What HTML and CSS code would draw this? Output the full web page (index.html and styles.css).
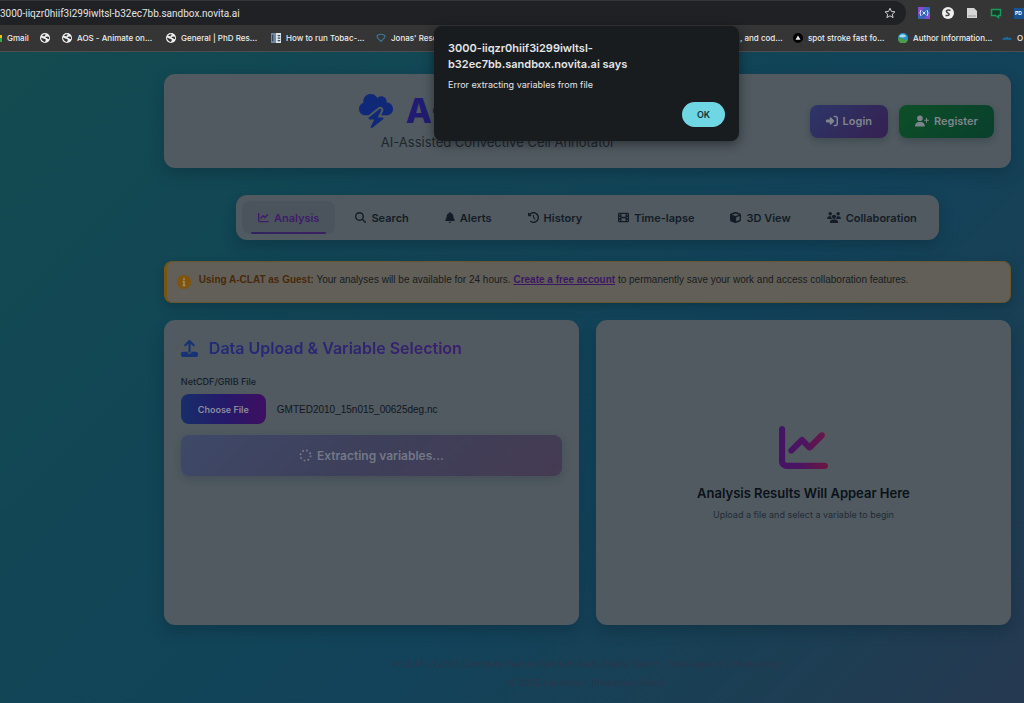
FILE: index.html
```html
<!DOCTYPE html>
<html lang="en">
<head>
<meta charset="utf-8">
<title>A-CLAT</title>
<link rel="stylesheet" href="styles.css">
</head>
<body>
<svg class="defs" aria-hidden="true">
  <defs>
    <linearGradient id="grad-result" x1="0" y1="0" x2="1" y2="0"><stop offset="0" stop-color="#431564"/><stop offset=".45" stop-color="#4c1462"/><stop offset="1" stop-color="#6c1740"/></linearGradient>
    <symbol id="chart" viewBox="0 0 512 512"><path d="M64 64c0-17.7-14.3-32-32-32S0 46.3 0 64V400c0 44.200 35.800 80 80 80H480c17.700 0 32-14.300 32-32s-14.300-32-32-32H80c-8.800 0-16-7.200-16-16V64zm406.600 86.600c12.500-12.500 12.500-32.800 0-45.300s-32.800-12.500-45.300 0L320 210.700l-57.400-57.400c-12.500-12.500-32.800-12.500-45.300 0l-112 112c-12.500 12.500-12.500 32.800 0 45.300s32.800 12.500 45.300 0L240 221.300l57.400 57.400c12.500 12.500 32.800 12.500 45.300 0l128-128z"/></symbol>
    <symbol id="globe" viewBox="0 0 20 20"><circle cx="10" cy="10" r="10" fill="#f1f1f1"/><path d="M3 6c3-1 3 1 5 1s1-3 4-3c-1-2-5-2-9 2zM2 9c4 1 5 3 8 3 3 1 1 4 0 6-4-1-8-4-8-9zM11 8c3-2 5-1 7 0v4c-3 1-3-2-5-2-1 0-2-1-2-2z" fill="#333"/></symbol>
  </defs>
</svg>
<div class="browser">
  <div class="toolbar">
    <div class="omnibox">
      <input class="url" type="text" aria-label="Address" value="3000-iiqzr0hiif3i299iwltsl-b32ec7bb.sandbox.novita.ai">
      <button class="star" aria-label="Bookmark this page"><svg viewBox="0 0 24 24" width="12" height="12"><path d="M12 2.500l2.900 6.400 7 .7-5.300 4.700 1.600 6.900L12 17.600l-6.200 3.600 1.600-6.900L2.100 9.600l7-.7z" fill="none" stroke="#d0d0d0" stroke-width="2"/></svg></button>
    </div>
    <div class="extensions">
      <svg viewBox="0 0 12 12"><rect width="12" height="12" rx="1" fill="#3565bd"/><path d="M0 0h7L0 9zM12 12V5L6 12z" fill="#894bcc"/><path d="M3 3q-2 3 0 6M9 3q2 3 0 6M4.500 4.500l3 3m0-3l-3 3" stroke="#e2e6ff" fill="none"/></svg>
      <svg viewBox="0 0 12 12"><circle cx="6" cy="6" r="6" fill="#f0f0f0"/><path d="M8.500 3.500C5 2 3 4.500 5.500 5.700S8 9 3.500 8.500" stroke="#444" stroke-width="1.500" fill="none"/></svg>
      <svg viewBox="0 0 12 12"><path d="M1 1h7l3 3v7H1z" fill="#d5d5d5"/><path d="M2 9h8" stroke="#999" fill="none"/></svg>
      <svg viewBox="0 0 12 12"><path d="M1.500 2.500h9v6h-2v2l-3-2h-4z" fill="#163b29" stroke="#199b59" stroke-width="1.500"/></svg>
      <span class="pdf">PD</span>
    </div>
  </div>
  <nav class="bookmarks" aria-label="Bookmarks">
    <a class="bm bm-gmail" href="#"><i class="gmail"></i>Gmail</a>
    <a class="bm bm-globe" href="#" aria-label="Site"><svg><use href="#globe"/></svg></a>
    <a class="bm bm-aos" href="#"><svg><use href="#globe"/></svg>AOS - Animate on...</a>
    <a class="bm bm-general" href="#"><svg><use href="#globe"/></svg>General | PhD Res...</a>
    <a class="bm bm-tobac" href="#"><svg viewBox="0 0 12 12"><rect width="6" height="12" fill="#71899e"/><rect x="6" width="6" height="12" fill="#dce4eb"/><path d="M2 2v8M8 3h3M8 6h3M8 9h3" stroke="#35495b" stroke-width="1.500"/></svg>How to run Tobac-...</a>
    <a class="bm bm-jonas" href="#"><svg viewBox="0 0 12 12"><path d="M1.500 3Q6 0 10.500 3C12 6 8 7.500 6 10 4 7.500 0 6 1.500 3z" fill="none" stroke="#3f7695" stroke-width="1.400"/></svg>Jonas' Resources</a>
    <a class="bm bm-code" href="#">, and cod...</a>
    <a class="bm bm-spot" href="#"><svg viewBox="0 0 12 12"><circle cx="6" cy="6" r="6" fill="#000"/><path d="M6 3l3 5H3z" fill="#eee"/></svg>spot stroke fast fo...</a>
    <a class="bm bm-author" href="#"><svg viewBox="0 0 12 12"><circle cx="6" cy="6" r="6" fill="#268fd0"/><path d="M0 7q3-3 6 0t6 0a6 6 0 0 1-12 0" fill="#4b9b4b"/><path d="M1 4q5-5 9 0-5 3-9 0" fill="#a7daf0"/></svg>Author Information...</a>
    <a class="bm bm-last" href="#"><svg viewBox="0 0 12 12"><path d="M0 8q2-4 4-2 2-3 4 0 2-2 4 2z" fill="#176fa0"/></svg>O</a>
  </nav>
</div>

<main class="page">
  <header class="card header">
    <div class="brand">
      <div class="brand-row">
        <svg viewBox="0 0 512 512" width="34" height="34" fill="#0f2878"><path d="M0 224c0 53 43 96 96 96h47.200L290 202.500c17.600-14.100 42.600-14 60.200 .2s22.800 38.600 12.800 58.800L333.700 320H352h64c53 0 96-43 96-96s-43-96-96-96c-.5 0-1.100 0-1.600 0c1.100-5.200 1.600-10.500 1.600-16c0-44.200-35.800-80-80-80c-24.300 0-46.100 10.900-60.800 28C256.500 24.300 219.100 0 176 0C114.100 0 64 50.100 64 112c0 7.100 .7 14.100 1.900 20.800C27.600 145.400 0 181.500 0 224zm330.100 3.600c-5.800-4.700-14.200-4.700-20.100-.1l-160 128c-5.300 4.200-7.400 11.400-5.100 17.800s8.300 10.700 15.100 10.700h70.100L177.700 488.800c-3.400 6.700-1.600 14.900 4.300 19.600s14.200 4.700 20.100 .1l160-128c5.300-4.200 7.400-11.400 5.100-17.800s-8.300-10.700-15.100-10.700H281.900l52.400-104.800c3.400-6.700 1.600-14.900-4.200-19.600z"/></svg>
        <h1>A-CLAT</h1>
      </div>
      <p class="tagline">AI-Assisted Convective Cell Annotator</p>
    </div>
    <div class="auth">
      <button class="btn login"><svg viewBox="0 0 512 512" width="12" height="12"><path d="M217.900 105.900L340.700 228.700c7.200 7.200 11.300 17.100 11.300 27.300s-4.100 20.100-11.300 27.300L217.900 406.100c-6.400 6.400-15 9.900-24 9.900c-18.700 0-33.900-15.200-33.900-33.900l0-62.100L32 320c-17.700 0-32-14.300-32-32l0-64c0-17.700 14.300-32 32-32l128 0 0-62.100c0-18.700 15.200-33.900 33.900-33.900c9 0 17.600 3.600 24 9.900zM352 416l64 0c17.700 0 32-14.300 32-32l0-256c0-17.700-14.300-32-32-32l-64 0c-17.700 0-32-14.300-32-32s14.300-32 32-32l64 0c53 0 96 43 96 96l0 256c0 53-43 96-96 96l-64 0c-17.700 0-32-14.300-32-32s14.300-32 32-32z"/></svg>Login</button>
      <button class="btn register"><svg viewBox="0 0 640 512" width="14" height="12"><path d="M96 128a128 128 0 1 1 256 0A128 128 0 1 1 96 128zM0 482.300C0 383.800 79.800 304 178.300 304h91.400C368.200 304 448 383.800 448 482.300c0 16.400-13.300 29.700-29.700 29.700H29.700C13.300 512 0 498.700 0 482.300zM504 312V248H440c-13.300 0-24-10.700-24-24s10.700-24 24-24h64V136c0-13.300 10.700-24 24-24s24 10.700 24 24v64h64c13.300 0 24 10.700 24 24s-10.700 24-24 24H552v64c0 13.300-10.700 24-24 24s-24-10.700-24-24z"/></svg>Register</button>
    </div>
  </header>

  <nav class="card tabs" aria-label="Sections">
    <button class="tab active"><svg viewBox="0 0 512 512" width="11" height="11"><use href="#chart"/></svg>Analysis</button>
    <button class="tab"><svg viewBox="0 0 512 512" width="11" height="11"><path d="M416 208c0 45.900-14.900 88.300-40 122.700L502.600 457.400c12.500 12.500 12.500 32.800 0 45.300s-32.800 12.500-45.300 0L330.700 376c-34.400 25.200-76.800 40-122.700 40C93.100 416 0 322.900 0 208S93.100 0 208 0S416 93.100 416 208zM208 352a144 144 0 1 0 0-288 144 144 0 1 0 0 288z"/></svg>Search</button>
    <button class="tab"><svg viewBox="0 0 448 512" width="10" height="11"><path d="M224 0c-17.700 0-32 14.300-32 32V51.200C119 66 64 130.600 64 208v18.800c0 47-17.300 92.400-48.500 127.600l-7.400 8.300c-8.400 9.400-10.400 22.900-5.300 34.400S19.400 416 32 416H416c12.600 0 24-7.400 29.200-18.900s3.100-25-5.300-34.400l-7.400-8.300C401.300 319.200 384 273.900 384 226.800V208c0-77.400-55-142-128-156.800V32c0-17.700-14.300-32-32-32zm45.300 493.300c12-12 18.700-28.300 18.700-45.300H160c0 17 6.700 33.300 18.700 45.300s28.300 18.700 45.300 18.700s33.300-6.700 45.300-18.700z"/></svg>Alerts</button>
    <button class="tab"><svg viewBox="0 0 512 512" width="11" height="11"><path d="M75 75L41 41C25.900 25.900 0 36.600 0 57.900V168c0 13.300 10.700 24 24 24H134.100c21.400 0 32.100-25.900 17-41l-30.800-30.800C155 85.500 203 64 256 64c106 0 192 86 192 192s-86 192-192 192c-40.800 0-78.600-12.700-109.700-34.400c-14.500-10.100-34.400-6.600-44.600 7.900s-6.600 34.400 7.900 44.600C151.200 495 201.700 512 256 512c141.400 0 256-114.600 256-256S397.400 0 256 0C185.300 0 121.300 28.700 75 75zm181 53c-13.300 0-24 10.700-24 24V256c0 6.400 2.500 12.500 7 17l72 72c9.400 9.400 24.600 9.400 33.900 0s9.400-24.600 0-33.900l-65-65V152c0-13.300-10.700-24-24-24z"/></svg>History</button>
    <button class="tab"><svg viewBox="0 0 512 512" width="11" height="11"><path fill-rule="evenodd" d="M64 32h384a64 64 0 0 1 64 64v320a64 64 0 0 1-64 64H64a64 64 0 0 1-64-64V96a64 64 0 0 1 64-64zM48 104v48h56v-48zM48 232v48h56v-48zM48 360v48h56v-48zM408 104v48h56v-48zM408 232v48h56v-48zM408 360v48h56v-48zM160 96v128h192V96zM160 288v128h192V288z"/></svg>Time-lapse</button>
    <button class="tab"><svg viewBox="0 0 512 512" width="11" height="11"><path d="M234.500 5.700c13.900-5 29.100-5 43.100 0l192 68.600C495 83.400 512 107.500 512 134.600V377.400c0 27-17 51.200-42.500 60.300l-192 68.600c-13.900 5-29.100 5-43.100 0l-192-68.600C17 428.600 0 404.500 0 377.400V134.600c0-27 17-51.200 42.500-60.300l192-68.600zM256 66L82.300 128 256 190l173.700-62L256 66zm32 368.600l160-57.100v-188L288 246.600v188z"/></svg>3D View</button>
    <button class="tab"><svg viewBox="0 0 640 512" width="14" height="11"><path d="M144 0a80 80 0 1 1 0 160A80 80 0 1 1 144 0zM512 0a80 80 0 1 1 0 160A80 80 0 1 1 512 0zM0 298.700C0 239.800 47.800 192 106.700 192h42.700c15.900 0 31 3.500 44.600 9.700c-1.300 7.200-1.900 14.700-1.900 22.300c0 38.200 16.800 72.500 43.300 96H21.300C9.600 320 0 310.400 0 298.700zM405.300 320c26.600-23.500 43.300-57.800 43.300-96c0-7.600-.7-15-1.900-22.300c13.600-6.300 28.700-9.700 44.600-9.700h42.700C592.200 192 640 239.800 640 298.700c0 11.800-9.600 21.300-21.300 21.300H405.300zM224 224a96 96 0 1 1 192 0 96 96 0 1 1 -192 0zM128 485.300C128 411.700 187.700 352 261.300 352H378.700C452.300 352 512 411.700 512 485.300c0 14.700-11.900 26.700-26.700 26.700H154.700c-14.700 0-26.700-11.900-26.700-26.700z"/></svg>Collaboration</button>
  </nav>

  <section class="notice">
    <svg viewBox="0 0 14 14" width="14" height="14"><circle cx="7" cy="7" r="7" fill="#80540b"/><path d="M7 3v2M5.500 6.500H7V10M5.500 10.500h3" stroke="#9a8a6a" stroke-width="1.500" fill="none"/></svg>
    <p><strong>Using A-CLAT as Guest:</strong> Your analyses will be available for 24 hours. <a href="#">Create a free account</a> to permanently save your work and access collaboration features.</p>
  </section>

  <div class="columns">
    <section class="card upload">
      <div class="upload-title">
        <svg viewBox="0 0 512 512" width="17" height="17" fill="#183276"><path d="M288 109.300V352c0 17.700-14.300 32-32 32s-32-14.300-32-32V109.300l-73.400 73.400c-12.500 12.500-32.800 12.500-45.300 0s-12.500-32.800 0-45.300l128-128c12.500-12.500 32.800-12.500 45.300 0l128 128c12.500 12.500 12.500 32.800 0 45.300s-32.800 12.500-45.300 0L288 109.300zM64 352H192c0 35.300 28.700 64 64 64s64-28.700 64-64H448c35.300 0 64 28.700 64 64v32c0 35.300-28.700 64-64 64H64c-35.300 0-64-28.700-64-64V416c0-35.300 28.700-64 64-64z"/></svg>
        <h2>Data Upload &amp; Variable Selection</h2>
      </div>
      <label class="field-label" for="choose">NetCDF/GRIB File</label>
      <div class="file-row">
        <button class="choose" id="choose">Choose File</button>
        <span>GMTED2010_15n015_00625deg.nc</span>
      </div>
      <button class="extract" disabled>
        <svg viewBox="0 0 14 14" width="13" height="13"><circle cx="7" cy="7" r="5.500" fill="none" stroke="#727887" stroke-width="2" stroke-dasharray="1.900 2.420"/></svg>Extracting variables...
      </button>
    </section>
    <section class="card results">
      <svg viewBox="0 0 512 512" width="49" height="49" fill="url(#grad-result)"><path d="M64 64c0-17.700-14.300-32-32-32S0 46.300 0 64V400c0 44.200 35.800 80 80 80H480c17.700 0 32-14.300 32-32s-14.300-32-32-32H80c-8.800 0-16-7.200-16-16V64zm406.600 86.600c12.500-12.500 12.500-32.800 0-45.300s-32.800-12.500-45.300 0L320 210.700l-57.400-57.400c-12.500-12.500-32.800-12.500-45.300 0l-112 112c-12.500 12.500-12.500 32.800 0 45.300s32.800 12.500 45.300 0L240 221.300l57.400 57.400c12.500 12.500 32.800 12.500 45.300 0l128-128z"/></svg>
      <h3>Analysis Results Will Appear Here</h3>
      <p>Upload a file and select a variable to begin</p>
    </section>
  </div>

  <footer class="footer">
    <p>A-CLAT v2.0.0 | Complete Feature Set with Auth, Alerts, Search, Time-lapse &amp; Collaboration</p>
    <p>© 2025 calvertoz - Production Ready</p>
  </footer>
</main>

<div class="dialog" role="alertdialog" aria-labelledby="dlg-title" aria-describedby="dlg-text">
  <h2 id="dlg-title">3000-iiqzr0hiif3i299iwltsl-b32ec7bb.sandbox.novita.ai says</h2>
  <p id="dlg-text">Error extracting variables from file</p>
  <button class="ok">OK</button>
</div>
</body>
</html>
```
FILE: styles.css
```css
* { box-sizing: border-box; }
body {
  margin: 0;
  min-height: 100vh;
  display: flex;
  flex-direction: column;
  font-family: Inter, "Liberation Sans", sans-serif;
  font-size: 10px;
  color: #10171f;
  overflow: hidden;
}
h1, h2, h3, p { margin: 0; }
button { font: inherit; border: 0; padding: 0; cursor: pointer; }
svg { flex: none; }
.defs { position: absolute; width: 0; height: 0; }

.browser { background: #353535; border-bottom: 1px solid #4b4f50; height: 52px; color: #ececec; }
.toolbar { display: flex; align-items: center; height: 25px; padding-top: 1px; }
.omnibox {
  display: flex;
  align-items: center;
  width: 906px;
  height: 24px;
  padding-right: 10px;
  background: #1f2124;
  border-radius: 0 12px 12px 0;
}
.url { flex: 1; border: 0; padding: 0; background: none; color: #e4e4e4; font: 10px Roboto, sans-serif; }
.star { display: flex; background: none; }
.extensions { display: flex; align-items: center; flex: 1; gap: 12px; padding-left: 12px; overflow: hidden; }
.extensions svg { width: 12px; height: 12px; }
.pdf { flex: none; width: 12px; height: 11px; background: #175393; color: #fff; font-size: 5px; font-weight: 700; line-height: 11px; padding-left: 1px; }
.bookmarks { display: flex; align-items: center; height: 26px; overflow: hidden; white-space: nowrap; }
.bm { display: flex; align-items: center; gap: 5px; flex: none; color: #ececec; font-size: 8px; font-weight: 500; text-decoration: none; }
.bm svg { width: 10px; height: 10px; }
.gmail { width: 2px; height: 7px; background: linear-gradient(#e8c020 50%, #2faa4d 50%); }
.bm-gmail { width: 40px; }
.bm-globe { width: 22px; }
.bm-aos { width: 104px; }
.bm-general { width: 105px; }
.bm-tobac { width: 105px; }
.bm-jonas { width: 364px; }
.bm-code { width: 53px; }
.bm-spot { width: 105px; }
.bm-author { width: 104px; }

.page {
  flex: 1;
  padding: 22px 13px 12px 16%;
  background: linear-gradient(135deg, #134b50 0%, #124655 30%, #12435a 60%, #1a3f54 80%, #263950 100%);
}
.card {
  background: #505a60;
  border-radius: 11px;
  box-shadow: 0 6px 14px rgba(10, 35, 48, .35);
}
.header { display: flex; align-items: center; height: 94px; padding: 0 17px 0 195px; }
.brand { flex: 1; }
.brand-row { display: flex; align-items: center; gap: 13px; height: 40px; }
h1 { font-size: 34px; line-height: 40px; font-weight: 800; color: #211c72; }
.tagline { padding: 3px 0 2px 22px; font-size: 13px; line-height: 16px; color: #1e272f; }
.auth { display: flex; gap: 11px; }
.btn {
  display: flex;
  align-items: center;
  gap: 5px;
  height: 33px;
  padding: 0 16px;
  border-radius: 8px;
  color: #7e858d;
  font-size: 11px;
  font-weight: 600;
  box-shadow: 0 3px 6px rgba(15, 30, 40, .25);
}
.btn svg { fill: currentColor; }
.login { background: linear-gradient(135deg, #2d3668, #352051); }
.register { background: linear-gradient(135deg, #0d4f26, #093f2d); }

.tabs { display: flex; gap: 4px; width: fit-content; margin: 27px auto 0; padding: 6px; }
.tab {
  position: relative;
  display: flex;
  align-items: center;
  gap: 5px;
  height: 33px;
  padding: 0 16px;
  border-radius: 8px;
  background: none;
  color: #141c27;
  font-size: 11px;
  font-weight: 600;
}
.tab svg { fill: currentColor; }
.tab.active { background: #4b545d; color: #3f1c68; }
.tab.active::after {
  content: "";
  position: absolute;
  left: 9px;
  right: 9px;
  bottom: 0;
  height: 2px;
  border-radius: 1px;
  background: linear-gradient(90deg, #30245e, #3d1f61);
}

.notice {
  display: flex;
  align-items: center;
  gap: 8px;
  height: 42px;
  margin-top: 21px;
  padding: 0 10px;
  border: 1px solid #67552d;
  border-left: 3px solid #7a5510;
  border-radius: 8px;
  background: #625f58;
  box-shadow: 0 4px 10px rgba(10, 35, 48, .35);
}
.notice p { padding-bottom: 4px; font-family: "Liberation Sans", sans-serif; font-size: 10px; line-height: 14px; color: #171c20; }
.notice strong { color: #482909; }
.notice a { color: #3b1763; font-weight: 700; }

.columns { display: grid; grid-template-columns: 1fr 1fr; gap: 17px; margin-top: 17px; }
.upload { min-height: 305px; padding: 17px; }
.upload-title { display: flex; align-items: center; gap: 11px; }
.upload-title h2 {
  font-size: 16px;
  line-height: 22px;
  font-weight: 600;
  background: linear-gradient(90deg, #20297a, #3c1e6b);
  background-clip: text;
  color: transparent;
}
.field-label { display: block; margin-top: 16px; font-size: 9px; line-height: 14px; font-weight: 500; color: #161e28; }
.file-row { display: flex; align-items: center; gap: 11px; margin-top: 5px; }
.file-row span { font-family: "Liberation Sans", sans-serif; font-size: 10px; }
.choose {
  height: 30px;
  padding: 0 17px;
  border-radius: 8px;
  background: linear-gradient(90deg, #172e69, #27186a 55%, #3f0f60);
  color: #8b8b9e;
  font-size: 9px;
  font-weight: 600;
}
.extract {
  display: flex;
  align-items: center;
  justify-content: center;
  gap: 5px;
  width: 100%;
  height: 41px;
  margin-top: 11px;
  border-radius: 8px;
  background: linear-gradient(135deg, #3e4968, #3e3f5a 50%, #453b52);
  color: #727887;
  font-size: 12px;
  font-weight: 600;
  box-shadow: 0 3px 8px rgba(30, 35, 60, .2);
}
.results { display: flex; flex-direction: column; align-items: center; justify-content: center; }
.results h3 { margin-top: 11px; font-size: 13px; line-height: 20px; font-weight: 600; color: #0b1119; }
.results p { margin-top: 5px; font-size: 9px; line-height: 14px; color: #222b35; }

.footer { display: flex; flex-direction: column; gap: 5px; margin-top: 32px; text-align: center; font-size: 9px; line-height: 14px; color: #2c364a; }

.dialog {
  position: absolute;
  top: 26px;
  left: 50%;
  width: 305px;
  margin-left: -78px;
  padding: 14px;
  display: flex;
  flex-direction: column;
  border-radius: 8px;
  background: #181c1f;
  box-shadow: 0 3px 12px rgba(0, 0, 0, .45);
  color: #e3e5e7;
}
.dialog h2 { width: 200px; font-size: 11px; line-height: 16px; font-weight: 600; }
.dialog p { margin-top: 6px; font-size: 9px; line-height: 14px; }
.ok { align-self: flex-end; width: 43px; height: 25px; margin-top: 10px; border-radius: 13px; background: #6fd6e3; color: #12343b; font-size: 9px; font-weight: 600; }
```
